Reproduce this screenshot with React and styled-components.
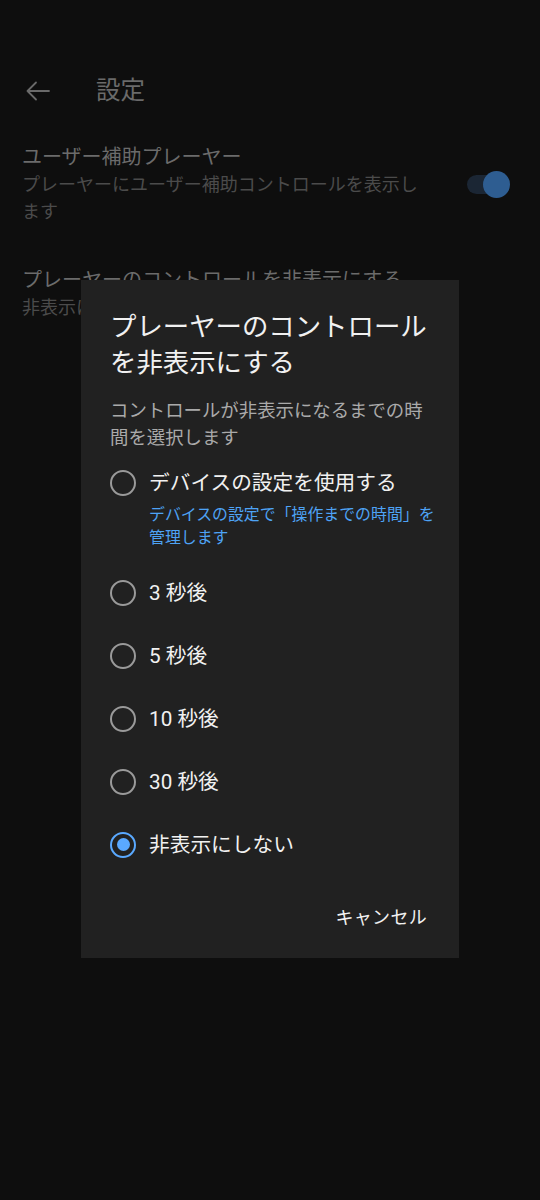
import React from "react";
import styled, { createGlobalStyle } from "styled-components";

const Global = createGlobalStyle`
  html, body { margin: 0; padding: 0; background: #0e0e0e; }
  body { font-family: Roboto, "Noto Sans CJK JP", "Noto Sans", sans-serif; }
  * { box-sizing: border-box; }
`;

const Page = styled.div`
  position: relative;
  width: 540px;
  height: 1200px;
  background: #0e0e0e;
  overflow: hidden;
`;

const Header = styled.header`
  display: flex;
  align-items: center;
  height: 52px;
  margin-top: 65px;
  padding-left: 25px;
  gap: 45px;
`;

const HeaderTitle = styled.h1`
  margin: 0;
  font-size: 24.5px;
  font-weight: 400;
  color: #6a6a6a;
  line-height: 32px;
`;

const List = styled.div`
  display: flex;
  flex-direction: column;
  gap: 41px;
  padding-top: 26px;
`;

const Item = styled.div`
  display: flex;
  align-items: center;
  padding: 0 37px 0 22px;
`;

const ItemText = styled.div`
  flex: 1;
  max-width: 405px;
`;

const ItemTitle = styled.div`
  font-size: 20px;
  line-height: 28px;
  color: #6b6b6b;
  white-space: nowrap;
`;

const ItemSub = styled.div`
  font-size: 18px;
  line-height: 27px;
  color: #4b4b4b;
`;

const Track = styled.div`
  position: relative;
  margin-left: auto;
  width: 36px;
  height: 19px;
  border-radius: 10px;
  background: #1b2634;
`;

const Thumb = styled.div`
  position: absolute;
  right: -7px;
  top: -4px;
  width: 27px;
  height: 27px;
  border-radius: 50%;
  background: #2e5d91;
`;

const Dialog = styled.div`
  position: absolute;
  left: 81px;
  top: 280px;
  width: 378px;
  height: 678px;
  background: #212121;
  padding: 29px 24px 0 29px;
  display: flex;
  flex-direction: column;
`;

const DialogTitle = styled.h2`
  margin: 0;
  font-size: 26.4px;
  font-weight: 400;
  line-height: 36px;
  color: #f1f1f1;
  white-space: nowrap;
`;

const DialogDesc = styled.p`
  margin: 16px 0 0;
  font-size: 18.4px;
  line-height: 27px;
  color: #aaaaaa;
  white-space: nowrap;
`;

const Options = styled.div`
  display: flex;
  flex-direction: column;
`;

const Option = styled.div`
  display: flex;
  align-items: flex-start;
  gap: 13px;
  padding: 16.5px 0 ${(p) => (p.$sub ? 12 : 16.5)}px;
`;

const Radio = styled.span`
  flex: none;
  width: 26px;
  height: 26px;
  margin-top: 2px;
  border-radius: 50%;
  border: 2.5px solid ${(p) => (p.$on ? "#5aa9ff" : "#9a9a9a")};
  display: flex;
  align-items: center;
  justify-content: center;
  &::after {
    content: "";
    display: ${(p) => (p.$on ? "block" : "none")};
    width: 13px;
    height: 13px;
    border-radius: 50%;
    background: #5aa9ff;
  }
`;

const OptionText = styled.div`
  display: flex;
  flex-direction: column;
`;

const OptionLabel = styled.div`
  font-size: 20.7px;
  line-height: 30px;
  color: #f1f1f1;
  white-space: nowrap;
`;

const OptionSub = styled.div`
  margin-top: 5.5px;
  font-size: 15.9px;
  line-height: 23px;
  color: #4ea3f5;
  white-space: nowrap;
`;

const Actions = styled.div`
  display: flex;
  justify-content: flex-end;
  margin-top: 30px;
`;

const TextButton = styled.button`
  background: none;
  border: none;
  padding: 0 8px;
  font-family: inherit;
  font-size: 18px;
  line-height: 24px;
  color: #f1f1f1;
  letter-spacing: 0.3px;
`;

const BackArrow = () => (
  <svg width="26" height="26" viewBox="0 0 26 26" fill="none" stroke="#6a6a6a" strokeWidth="1.8" strokeLinecap="round" strokeLinejoin="round">
    <path d="M24 13H2.5M11 4.5L2.5 13L11 21.5" />
  </svg>
);

const options = [
  { label: "3 秒後" },
  { label: "5 秒後" },
  { label: "10 秒後" },
  { label: "30 秒後" },
  { label: "非表示にしない", on: true },
];

export default function App() {
  return (
    <Page>
      <Global />
      <Header>
        <BackArrow />
        <HeaderTitle>設定</HeaderTitle>
      </Header>
      <List>
        <Item>
          <ItemText>
            <ItemTitle>ユーザー補助プレーヤー</ItemTitle>
            <ItemSub>
              プレーヤーにユーザー補助コントロールを表示し
              <br />
              ます
            </ItemSub>
          </ItemText>
          <Track>
            <Thumb />
          </Track>
        </Item>
        <Item>
          <ItemText>
            <ItemTitle>プレーヤーのコントロールを非表示にする</ItemTitle>
            <ItemSub>非表示にしない</ItemSub>
          </ItemText>
        </Item>
      </List>

      <Dialog>
        <DialogTitle>
          プレーヤーのコントロール
          <br />
          を非表示にする
        </DialogTitle>
        <DialogDesc>
          コントロールが非表示になるまでの時
          <br />
          間を選択します
        </DialogDesc>
        <Options>
          <Option $sub>
            <Radio />
            <OptionText>
              <OptionLabel>デバイスの設定を使用する</OptionLabel>
              <OptionSub>
                デバイスの設定で「操作までの時間」を
                <br />
                管理します
              </OptionSub>
            </OptionText>
          </Option>
          {options.map((o) => (
            <Option key={o.label}>
              <Radio $on={o.on} />
              <OptionText>
                <OptionLabel>{o.label}</OptionLabel>
              </OptionText>
            </Option>
          ))}
        </Options>
        <Actions>
          <TextButton>キャンセル</TextButton>
        </Actions>
      </Dialog>
    </Page>
  );
}
